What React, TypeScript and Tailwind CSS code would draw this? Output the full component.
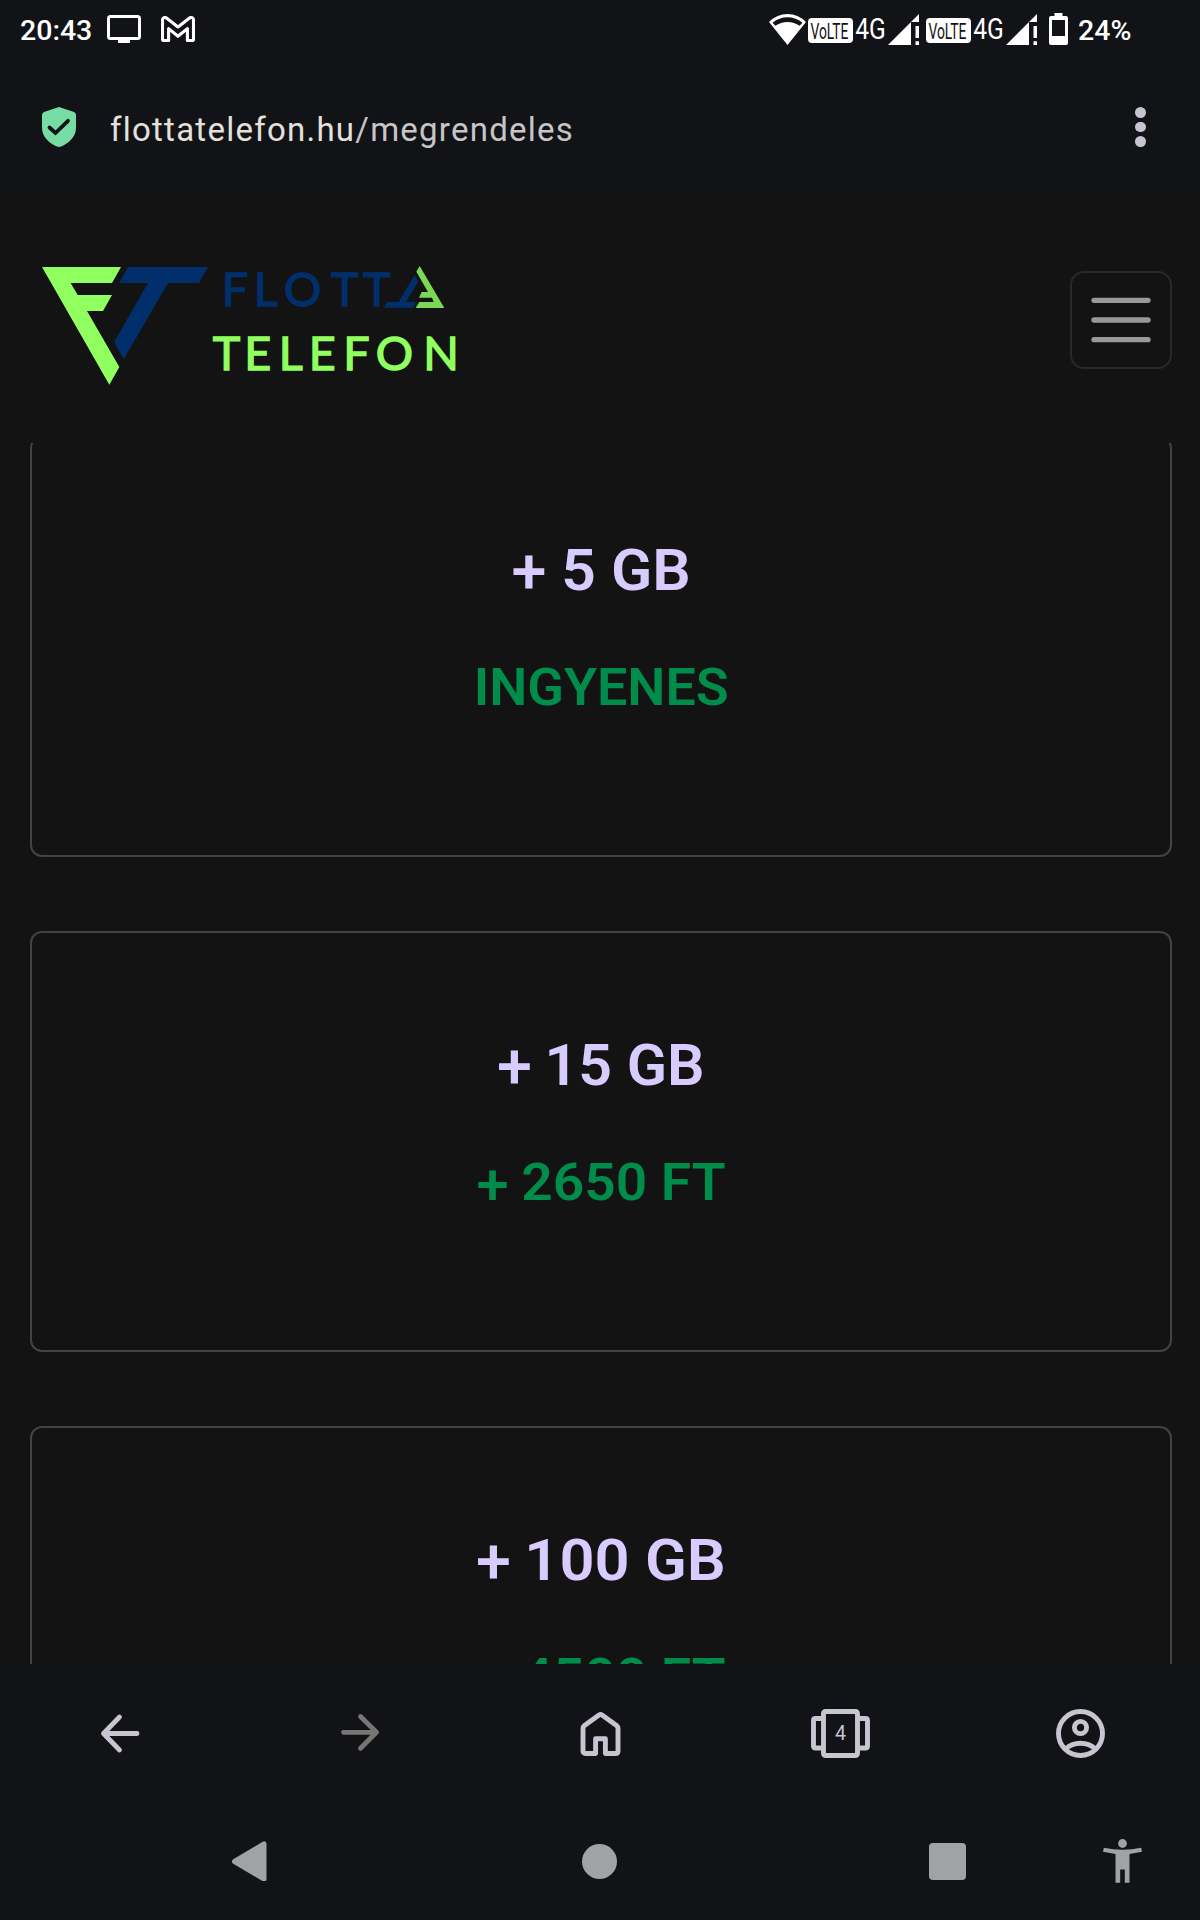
import React from "react";

const cards = [
  { title: "5 GB", price: "INGYENES", pricePlus: false, titleFit: "ml-[17px] mr-[3px] scale-x-[1.045]", priceFit: "scale-x-[1.035]" },
  { title: "15 GB", price: "2650 FT", pricePlus: true, titleFit: "ml-[14px] mr-[2px] scale-x-[1.02]", priceFit: "ml-[18px] mr-[6px] scale-x-[1.06]" },
  { title: "100 GB", price: "4500 FT", pricePlus: true, titleFit: "ml-[19px] mr-[6px] scale-x-[1.06]", priceFit: "ml-[18px] mr-[6px] scale-x-[1.06]" },
];

function Volte() {
  return (
    <svg className="h-[28px] w-[45px]" viewBox="0 0 45 28">
      <rect width="45" height="25" rx="4" fill="#fff" />
      <text transform="translate(2.4 20.8) scale(.615 1)" fontSize="22.5" fontFamily="Roboto" fill="#121317">VoLTE</text>
    </svg>
  );
}

function FourG() {
  return (
    <svg className="ml-[2px] h-[36px] w-[31px]" viewBox="0 0 31 36">
      <text transform="translate(.2 28) scale(.82 1)" fontSize="30" fontFamily="Roboto" fill="#fff">4G</text>
    </svg>
  );
}

function Signal() {
  return (
    <svg className="ml-[2px] h-[31px] w-[31px]" viewBox="0 0 31 31" fill="#fff">
      <path d="M31 0V8H23V31H0Z" />
      <path d="M27.5 12H31V24H27.5ZM27.5 27.2H31V31H27.5Z" />
    </svg>
  );
}

function StatusBar() {
  return (
    <div className="flex h-[58px] items-center text-white">
      <span className="ml-[20px] w-[74px] whitespace-nowrap pt-[4px] text-[28.5px] font-medium leading-[32px]">20:43</span>
      <svg className="ml-[13px] h-[28px] w-[34px]" viewBox="0 0 34 28">
        <rect x="1.5" y="1.5" width="31" height="22" rx="2" fill="none" stroke="#fff" strokeWidth="3" />
        <path d="M11 24H23V28H11Z" fill="#fff" />
      </svg>
      <svg className="ml-[20px] h-[26px] w-[34px]" viewBox="0 0 34 26" fill="none" stroke="#fff" strokeWidth="3.100" strokeLinejoin="round">
        <path d="M1.5 4.2C1.500 1.500 3.8 .8 5.8 2.200L17 11L28.2 2.200C30.2 .8 32.500 1.500 32.500 4.2V23.2Q32.500 24.500 31.2 24.500H26.4V12.6L17 20.2L7.6 12.6V24.500H2.8Q1.500 24.500 1.500 23.2Z" />
      </svg>
      <div className="ml-auto mr-[68px] flex items-center">
        <svg className="h-[31px] w-[37px]" viewBox="0 0 37 31" fill="#fff">
          <path fillRule="evenodd" d="M0 8Q8 0 18.500 0T37 8L18.500 31ZM3.600 8.800L6.300 11.800Q11.800 7.900 18.500 7.900T30.700 11.800L33.400 8.800Q26.800 3.300 18.500 3.300T3.600 8.800Z" />
        </svg>
        <div className="ml-[2px] mt-[6px] flex"><Volte /></div>
        <FourG />
        <Signal />
        <div className="ml-[7px] mt-[6px] flex"><Volte /></div>
        <FourG />
        <Signal />
        <svg className="ml-[12px] h-[32px] w-[19px]" viewBox="0 0 19 32">
          <path fillRule="evenodd" fill="#fff" d="M5.500 0H13.500V3H17Q19 3 19 5V30Q19 32 17 32H2Q0 32 0 30V5Q0 3 2 3H5.500ZM3 7V23H16V7Z" />
        </svg>
        <span className="ml-[10px] w-[54px] whitespace-nowrap pt-[4px] text-[28.5px] font-medium leading-[32px]">24%</span>
      </div>
    </div>
  );
}

function AddressBar() {
  return (
    <div className="flex h-[139px] items-start">
      <svg className="ml-[42px] mt-[49px] h-[40px] w-[34px]" viewBox="0 0 34 40">
        <path fill="#77dca3" d="M15.500 .5Q17 -.3 18.500 .5L32 5Q34 5.800 34 8V21C34 31 25 37 19 39.600Q17 40.400 15 39.600C9 37 0 31 0 21V8Q0 5.800 2 5Z" />
        <path d="M7.500 20.500L13.500 26L26 13.800" fill="none" stroke="#121317" strokeWidth="3.800" strokeLinecap="round" />
      </svg>
      <span className="ml-[34px] mt-[51px] whitespace-nowrap text-[33px] leading-[42px] tracking-[1.25px] text-[#e4e1dd]">
        flottatelefon.hu<span className="text-[#c7c5c8]">/megrendeles</span>
      </span>
      <div className="ml-auto mr-[54px] mt-[49px] flex flex-col gap-[4px]">
        <i className="h-[10.600px] w-[10.600px] rounded-full bg-[#c7c5d0]" />
        <i className="h-[10.600px] w-[10.600px] rounded-full bg-[#c7c5d0]" />
        <i className="h-[10.600px] w-[10.600px] rounded-full bg-[#c7c5d0]" />
      </div>
    </div>
  );
}

function Logo() {
  return (
    <svg className="h-[160px] w-[460px]" viewBox="0 0 1380 480">
      <path fill="#90ff60" d="M66 81H303L276 129H152L173 165H276L249 213H201L298 381L268 434Z" />
      <path fill="#002f6c" d="M324 81H564L537 129H444L311 358L282 307L384 129H298Z" />
      <g fontFamily="Lato" fontWeight="400" fontSize="140" strokeWidth="4">
        <text y="199" fill="#002f6c" stroke="#002f6c" x="605 701 792 933 1029">FLOTT</text>
        <text y="391" fill="#90ff60" stroke="#90ff60" x="578 673 776 866 970 1067 1210">TELEFON</text>
      </g>
      <path fill="#002f6c" d="M1184 104L1195 124L1158 186H1188L1180 203H1092L1102 186H1136Z" />
      <path fill="#7bd955" d="M1199 78L1273 204H1187L1198 186H1241L1236 173H1197L1205 156H1224L1189 95Z" />
    </svg>
  );
}

function SiteHeader() {
  return (
    <header className="flex h-[246px] items-start justify-between bg-[#131313] pl-[20px] pr-[28px]">
      <div className="mt-[43px]"><Logo /></div>
      <button className="mt-[74px] flex h-[98px] w-[102px] items-center justify-center rounded-[14px] border-2 border-[#292929]">
        <svg className="h-[46px] w-[60px]" viewBox="0 0 60 46" stroke="#999" strokeWidth="5.300" strokeLinecap="round">
          <path d="M3 3.300H57M3 23H57M3 42.700H57" />
        </svg>
      </button>
    </header>
  );
}

function BottomBar() {
  return (
    <div className="h-[256px] bg-[#121317]">
      <nav className="grid h-[138px] grid-cols-5 place-items-center">
        <svg className="h-[50px] w-[50px]" viewBox="0 0 50 50" fill="none" stroke="#c7c5d0" strokeWidth="4.800" strokeLinecap="round" strokeLinejoin="round">
          <path d="M42 25.500H8.500M24.500 9L8.500 25.500L24.500 42" />
        </svg>
        <svg className="h-[50px] w-[50px]" viewBox="0 0 50 50" fill="none" stroke="#777673" strokeWidth="4.800" strokeLinecap="round" strokeLinejoin="round">
          <path d="M8.500 24.300H41.500M25.500 8.500L41.500 24.300L25.500 40.200" />
        </svg>
        <svg className="h-[50px] w-[50px]" viewBox="0 0 50 50" fill="none" stroke="#c7c5d0" strokeWidth="4.900" strokeLinejoin="round">
          <path d="M8 20.500Q8 18.500 9.500 17.400L24 7Q25.500 6 27 7L41.500 17.400Q43 18.500 43 20.500V43Q43 45.500 40.500 45.500H30.400V30.700H20.600V45.500H10.500Q8 45.500 8 43Z" />
        </svg>
        <svg className="h-[50px] w-[60px]" viewBox="0 0 60 50" fill="none" stroke="#c7c5d0" strokeWidth="4.900">
          <rect x="13.500" y="3.500" width="34" height="44" rx="2" />
          <path d="M13 10.500H5.500Q3.500 10.500 3.500 12.500V38Q3.500 40 5.500 40H13M48 10.500H55.500Q57.500 10.500 57.500 12.500V38Q57.500 40 55.500 40H48" />
          <text x="30.500" y="31.500" fontFamily="Roboto" fontSize="19.500" textAnchor="middle" fill="#c7c5d0" stroke="none">4</text>
        </svg>
        <svg className="h-[50px] w-[50px]" viewBox="0 0 50 50" fill="none" stroke="#c7c5d0" strokeWidth="4.900">
          <circle cx="25.500" cy="25.500" r="22" />
          <circle cx="25.500" cy="19.500" r="6.100" />
          <path d="M10.500 41Q17 35.300 25.500 35.300T40.500 41" />
        </svg>
      </nav>
      <div className="flex h-[118px] items-center">
        <svg className="ml-[231px] h-[40px] w-[36px]" viewBox="0 0 36 40" fill="#a1a2a3" stroke="#a1a2a3" strokeWidth="5" strokeLinejoin="round">
          <path d="M3.500 20.500L33 3V38Z" />
        </svg>
        <div className="ml-[315px] h-[35px] w-[35px] rounded-full bg-[#a1a2a3]" />
        <div className="ml-[312px] h-[37px] w-[37px] rounded-[4px] bg-[#a1a2a3]" />
        <svg className="ml-[136.500px] h-[44px] w-[39px]" viewBox="0 0 39 44" fill="#a1a2a3">
          <circle cx="19.500" cy="4.500" r="4.400" />
          <path d="M.8 8.700Q19.500 13 38.200 8.700L39 12.800L26.500 15V43.800H21.800V30.500H17.200V43.800H12.500V15L0 12.800Z" />
        </svg>
      </div>
    </div>
  );
}

export default function App() {
  return (
    <div className="flex h-[1920px] w-[1200px] flex-col overflow-hidden bg-[#121317] font-[Roboto,sans-serif]">
      <StatusBar />
      <AddressBar />
      <SiteHeader />
      <main className="h-[1221px] overflow-hidden bg-[#131313] px-[30px] pr-[28px]">
        <div className="-mt-[7px] flex flex-col gap-[74px]">
          {cards.map((c) => (
            <section key={c.title} className="flex h-[421px] shrink-0 flex-col items-center rounded-[12px] border-2 border-[#434346] pt-[93px] text-center font-semibold">
              <h2 className="flex h-[78px] whitespace-nowrap text-[58px] leading-[78px] text-[#d8ccff]">
                <span className="pt-[2px] text-[63px] font-medium">+</span>
                <span className={c.titleFit}>{c.title}</span>
              </h2>
              <p className="mt-[40px] flex h-[78px] whitespace-nowrap text-[52px] leading-[78px] text-[#008c4b]">
                {c.pricePlus && <span className="pt-[1px] text-[58px] font-medium">+</span>}
                <span className={c.priceFit}>{c.price}</span>
              </p>
            </section>
          ))}
        </div>
      </main>
      <BottomBar />
    </div>
  );
}
